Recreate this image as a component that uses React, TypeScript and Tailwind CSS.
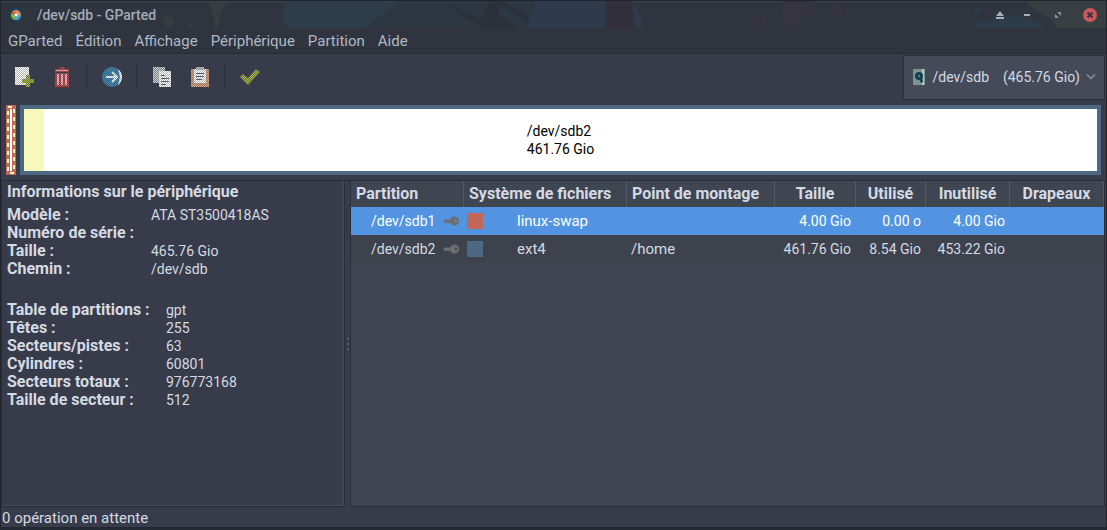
import React from "react";

const menus = ["GParted", "Édition", "Affichage", "Périphérique", "Partition", "Aide"];

const deviceInfo = [
  ["Modèle :", "ATA ST3500418AS"],
  ["Numéro de série :", ""],
  ["Taille :", "465.76 Gio"],
  ["Chemin :", "/dev/sdb"],
];

const tableInfo = [
  ["Table de partitions :", "gpt"],
  ["Têtes :", "255"],
  ["Secteurs/pistes :", "63"],
  ["Cylindres :", "60801"],
  ["Secteurs totaux :", "976773168"],
  ["Taille de secteur :", "512"],
];

const partitions = [
  { name: "/dev/sdb1", swatch: "bg-[#c1665a]", fs: "linux-swap", mount: "", size: "4.00 Gio", used: "0.00 o", unused: "4.00 Gio", row: "bg-[#5294e2] text-white" },
  { name: "/dev/sdb2", swatch: "bg-[#4b6983]", fs: "ext4", mount: "/home", size: "461.76 Gio", used: "8.54 Gio", unused: "453.22 Gio", row: "bg-[#3e424d]" },
];

const dithers = [
  ["white", "#ffffff", "#b4b5b9"],
  ["page", "#c9c9c9", "#85868b"],
  ["green", "#a9b843", "#68713f"],
  ["red", "#c5423f", "#843d45"],
  ["pink", "#e8bcbc", "#a98e93"],
  ["blue", "#3f86b5", "#3b627f"],
  ["tan", "#d9a583", "#927766"],
];

function Dithers() {
  return (
    <svg aria-hidden="true" className="absolute h-0 w-0">
      <defs>
        {dithers.map(([id, a, b]) => (
          <pattern key={id} id={id} width="2" height="2" patternUnits="userSpaceOnUse">
            <path fill={a} d="M0 0h2v2H0z" />
            <path fill={b} shapeRendering="crispEdges" d="M0 0h1v1H0zM1 1h1v1H1z" />
          </pattern>
        ))}
      </defs>
    </svg>
  );
}

function Glyph({ children }: { children: React.ReactNode }) {
  return <svg aria-hidden="true" width="24" height="24" viewBox="0 0 24 24">{children}</svg>;
}

function ToolButton({ label, children }: { label: string; children: React.ReactNode }) {
  return (
    <button aria-label={label} className="flex h-9 w-[38px] shrink-0 items-center justify-center">
      <Glyph>{children}</Glyph>
    </button>
  );
}

function Separator() {
  return <div className="mr-1.5 ml-[5px] h-6 w-px shrink-0 bg-[#2b2e38]" />;
}

function TitleBar() {
  return (
    <header className="relative flex h-7 shrink-0 items-center overflow-hidden border-t border-[#22252c] bg-[#2f343f] shadow-[inset_0_1px_0_#3b404b]">
      <svg aria-hidden="true" className="absolute inset-0 h-full w-full" viewBox="0 0 1107 28" preserveAspectRatio="none">
        <path fill="#2d3d4a" d="M286 0h112l-32 28h-79l-6-10z" />
        <path fill="#2d3742" d="M398 0h137l-9 28H366z" />
        <path fill="#2c303b" d="m450 3 30 16 11-19 8 0v14l18 14h-34l-25-16zM497 0h6l30 20v8z" />
        <path fill="#2e3b4c" d="M536 0h70v28h-80z" />
        <path fill="#322f3b" d="M606 0h25l3 18-6 10h-20z" />
        <path fill="#2d3b4b" d="m632 5 6 2 6 21h-8z" />
        <path fill="#35343f" d="M765 28c-8-6-14-12-8-17 8 3 10 3 13 17zM785 0h30c0 14-9 16-14 15l-2 13h-15c3-10-5-17 1-28zM831 4c6-5 11-1 11 6 3 5 0 8-4 8-5-3-7-8-7-14z" />
        <path fill="#2d3c4a" d="m975 28 3-6 10-1 7-4c10-4 20-3 31 1l11 3 10 7zM976 7h5v6h-5z" />
        <path fill="#373f40" d="M1027 0h80v28h-49c-5-14-24-16-31-28z" />
        <path fill="#383d3f" d="M207 1h19l-6 11-3 16h-3l-1-12zM163 22c-2-7 10-9 10-1 0 7-8 8-10 1zM187 26c0-4 5-4 6 0z" />
        <path fill="#353139" d="M28 28c4-4 15-4 20 0z" />
      </svg>
      <svg aria-hidden="true" className="relative ml-[7px] shrink-0" width="16" height="16" viewBox="0 0 16 16">
        <circle cx="8" cy="8" r="7" fill="#184458" />
        <path fill="#e08a5a" d="M8 3a5 5 0 0 1 5 5l-1 2-4-1V6L4 5a5 5 0 0 1 4-2z" />
        <path fill="#d9602c" d="m4 5 4 0v2H5L3 8z" />
        <path fill="#86b13e" d="M3 7a5 5 0 0 0 4 6l1-3-3-3z" />
        <path fill="#4b9ecb" d="M7 13a5 5 0 0 0 6-4l-3-1-3 3z" />
        <circle cx="8" cy="8" r="1.8" fill="#e7edf0" />
      </svg>
      <h1 className="relative ml-[13px] text-[14px] leading-5 font-medium text-[#a5acb9]">/dev/sdb - GParted</h1>
      <div className="relative mr-2 ml-auto flex items-center gap-4 text-[#a9afb8]">
        <button aria-label="Enrouler">
          <svg width="16" height="16" viewBox="0 0 16 16" fill="currentColor"><path d="m8 4 4 5H4zM4 10h8v2H4z" /></svg>
        </button>
        <button aria-label="Réduire" className="-ml-1">
          <svg width="14" height="16" viewBox="0 0 14 16" fill="currentColor"><path d="M4 7h6v2H4z" /></svg>
        </button>
        <button aria-label="Agrandir">
          <svg width="16" height="16" viewBox="0 0 16 16" fill="#8a919c"><path d="M7 5h4v4zM5 7l4 4H5z" /></svg>
        </button>
        <button aria-label="Fermer">
          <svg width="16" height="16" viewBox="0 0 16 16"><circle cx="8" cy="8" r="7" fill="#cc575d" /><path stroke="#2f343f" strokeWidth="1.8" d="m5.5 5.5 5 5m0-5-5 5" /></svg>
        </button>
      </div>
    </header>
  );
}

function Toolbar() {
  return (
    <div className="flex h-[46px] shrink-0 items-center pr-px pl-1">
      <ToolButton label="Nouvelle partition">
        <path fill="url(#white)" d="M3 2h14v12h-4v4h1v2H3z" />
        <path fill="url(#green)" d="M14 10h4v4h4v4h-4v4h-4v-4h-4v-4h4z" />
      </ToolButton>
      <ToolButton label="Supprimer">
        <path fill="url(#red)" d="M5 4h4l1-2h4l1 2h4v3H5zM5 8h14v14H5z" />
        <path fill="url(#pink)" d="M7 9h2v11H7zM11 9h2v11h-2zM15 9h2v11h-2zM6 5h12v1H6z" />
      </ToolButton>
      <Separator />
      <ToolButton label="Redimensionner ou déplacer">
        <circle cx="12" cy="12" r="10" fill="url(#blue)" />
        <path fill="url(#white)" d="M18 4a10 10 0 0 1 0 16l2-8z" />
        <path fill="none" stroke="url(#white)" strokeWidth="2" d="M6 12h10M12 7l5 5-5 5" />
      </ToolButton>
      <Separator />
      <ToolButton label="Copier">
        <path fill="url(#page)" d="M3 2h12v4H9v12H3z" />
        <path fill="url(#white)" d="M9 6h12v16H9z" />
        <path fill="#555b66" d="M11 10h4v1h-4zM11 13h8v1h-8zM11 16h8v1h-8zM11 19h5v1h-5z" />
      </ToolButton>
      <ToolButton label="Coller">
        <path fill="url(#tan)" d="M3 4h18v18H3z" />
        <path fill="url(#white)" d="M6 4h3V2h6v2h3v14H6z" />
        <path fill="url(#page)" d="M8 2h8v3H8z" />
        <path fill="#555b66" d="M8 8h8v1H8zM8 11h8v1H8zM8 14h6v1H8z" />
      </ToolButton>
      <Separator />
      <ToolButton label="Appliquer">
        <path fill="url(#green)" d="m2 12 3-3 5 4 8-9 4 3L10 20z" />
      </ToolButton>
      <button aria-label="Périphérique" className="ml-auto flex h-[45px] shrink-0 items-center rounded-[2px] border border-[#2b2e39] bg-[#444a58] pr-2 pl-2">
        <svg aria-hidden="true" width="14" height="16" viewBox="0 0 14 16">
          <path fill="#7d9494" d="M1 0h12v16H1z" />
          <path fill="#c1c7b5" d="M10 0h2v16h-2z" />
          <circle cx="7" cy="7" r="4" fill="#123f51" />
          <path fill="#123f51" d="m6 8 4-1 1 6-2 1z" />
          <circle cx="7" cy="7" r="1.2" fill="#598491" />
        </svg>
        <span className="ml-1.5 text-[14px] whitespace-pre">/dev/sdb    (465.76 Gio)</span>
        <svg aria-hidden="true" className="ml-1.5" width="10" height="10" viewBox="0 0 10 10"><path fill="none" stroke="#8d94a1" strokeWidth="1.5" d="m1 2.5 4 4 4-4" /></svg>
      </button>
    </div>
  );
}

function PartitionMap() {
  return (
    <div className="flex h-[81px] shrink-0 gap-1 border-b border-[#2b2e39] px-[5px] pt-[5px]">
      <button aria-label="/dev/sdb1" className="h-[70px] w-2.5 shrink-0">
        <svg width="10" height="70" viewBox="0 0 10 70" shapeRendering="crispEdges">
          <path fill="#c1665a" d="M0 0h10v70H0z" />
          <path fill="#fff" d="M4 4h2v62H4z" />
          <path fill="#f8f8ba" d="M2 1h4v2H2zM4 67h4v2H4z" />
          <path stroke="#f8f8ba" strokeWidth="2" strokeDasharray="4 4" d="M2 6v60M8 4v60" />
        </svg>
      </button>
      <button aria-label="/dev/sdb2 461.76 Gio" className="flex h-[70px] flex-1 items-center border-4 border-[#4b6983] bg-white text-left text-[14px] leading-[18px] text-black">
        <span className="h-full w-5 bg-[#f8f8ba]" />
        <span className="-ml-5 flex-1 text-center"><span className="inline-block text-left">/dev/sdb2<br />461.76 Gio</span></span>
      </button>
    </div>
  );
}

function InfoGrid({ rows, cols }: { rows: string[][]; cols: string }) {
  return (
    <dl className={`grid leading-[18px] ${cols}`}>
      {rows.map(([k, v]) => (
        <React.Fragment key={k}>
          <dt className="text-[16px] leading-[18px] font-bold whitespace-nowrap">{k}</dt>
          <dd className="h-[18px] text-[14px] leading-[18px]">{v}</dd>
        </React.Fragment>
      ))}
    </dl>
  );
}

function Key() {
  return (
    <svg aria-hidden="true" className="shrink-0" width="16" height="10" viewBox="0 0 16 10">
      <path fill="#6d6e70" fillRule="evenodd" d="M0 5l2-1.5h5.2a4.6 4.6 0 1 1 .2 3.5L6.500 6.200 5.500 7.500 4.500 6.500 3.500 7.500 2.500 6.500H1zM12 3.800v2.400h2V3.800z" />
    </svg>
  );
}

function PartitionTable() {
  const th = "border-r border-[#525863] px-[5px] text-[16px] font-bold whitespace-nowrap";
  return (
    <section className="min-w-0 flex-1 overflow-hidden border border-[#2b2e39] border-t-0 bg-[#404552]">
      <table className="w-full table-fixed border-separate border-spacing-0">
        <colgroup>
          <col className="w-[113px]" />
          <col className="w-[163px]" />
          <col className="w-[148px]" />
          <col className="w-[81px]" />
          <col className="w-[70px]" />
          <col className="w-[84px]" />
          <col />
        </colgroup>
        <thead>
          <tr className="h-[26px]">
            <th className={`text-left ${th}`}>Partition</th>
            <th className={`text-left ${th}`}>Système de fichiers</th>
            <th className={`text-left ${th}`}>Point de montage</th>
            <th className={th}>Taille</th>
            <th className={th}>Utilisé</th>
            <th className={th}>Inutilisé</th>
            <th className={th}>Drapeaux</th>
          </tr>
        </thead>
        <tbody>
          {partitions.map((p) => (
            <tr key={p.name} className={`h-7 text-[14px] whitespace-nowrap ${p.row}`}>
              <td className="pr-[5px] pl-5"><span className="flex items-center justify-between">{p.name}<Key /></span></td>
              <td className="pl-[3px] text-[15px]"><span className="flex items-center gap-[34px]"><span className={`h-4 w-4 ${p.swatch}`} />{p.fs}</span></td>
              <td className="pl-1 text-[15px]">{p.mount}</td>
              <td className="pr-[5px] text-right">{p.size}</td>
              <td className="pr-[5px] text-right">{p.used}</td>
              <td className="pr-[5px] text-right">{p.unused}</td>
              <td />
            </tr>
          ))}
        </tbody>
      </table>
    </section>
  );
}

export default function App() {
  return (
    <div className="flex h-screen min-h-[460px] flex-col border-x border-b-[3px] border-[#22252c] border-b-[#232931] bg-[#383c4a] font-['Roboto',sans-serif] text-[15px] leading-5 text-[#d3dae3]">
      <Dithers />
      <TitleBar />
      <nav className="flex h-[26px] shrink-0 items-center gap-[13px] border-b border-[#262a33] bg-[#2f343f] pt-px pl-[7px] text-[#afb8c6]">
        {menus.map((m) => <button key={m}>{m}</button>)}
      </nav>
      <Toolbar />
      <PartitionMap />
      <main className="flex min-h-0 flex-1">
        <section className="w-[344px] shrink-0 overflow-hidden border border-t-0 border-[#2b2e39] pl-[5px] shadow-[inset_-1px_-1px_0_#444a5a]">
          <h2 className="mb-1 pt-px text-[16px] leading-5 font-bold">Informations sur le périphérique</h2>
          <InfoGrid rows={deviceInfo} cols="grid-cols-[144px_1fr]" />
          <div className="h-[23px]" />
          <InfoGrid rows={tableInfo} cols="grid-cols-[159px_1fr]" />
        </section>
        <div className="flex w-[5px] shrink-0 flex-col items-center justify-center gap-[3px]">
          <span className="h-0.5 w-0.5 bg-[#5a5f6d]" />
          <span className="h-0.5 w-0.5 bg-[#5a5f6d]" />
          <span className="h-0.5 w-0.5 bg-[#5a5f6d]" />
        </div>
        <PartitionTable />
        <div className="w-px" />
      </main>
      <footer className="h-5 shrink-0 pl-px leading-[22px]">0 opération en attente</footer>
    </div>
  );
}
